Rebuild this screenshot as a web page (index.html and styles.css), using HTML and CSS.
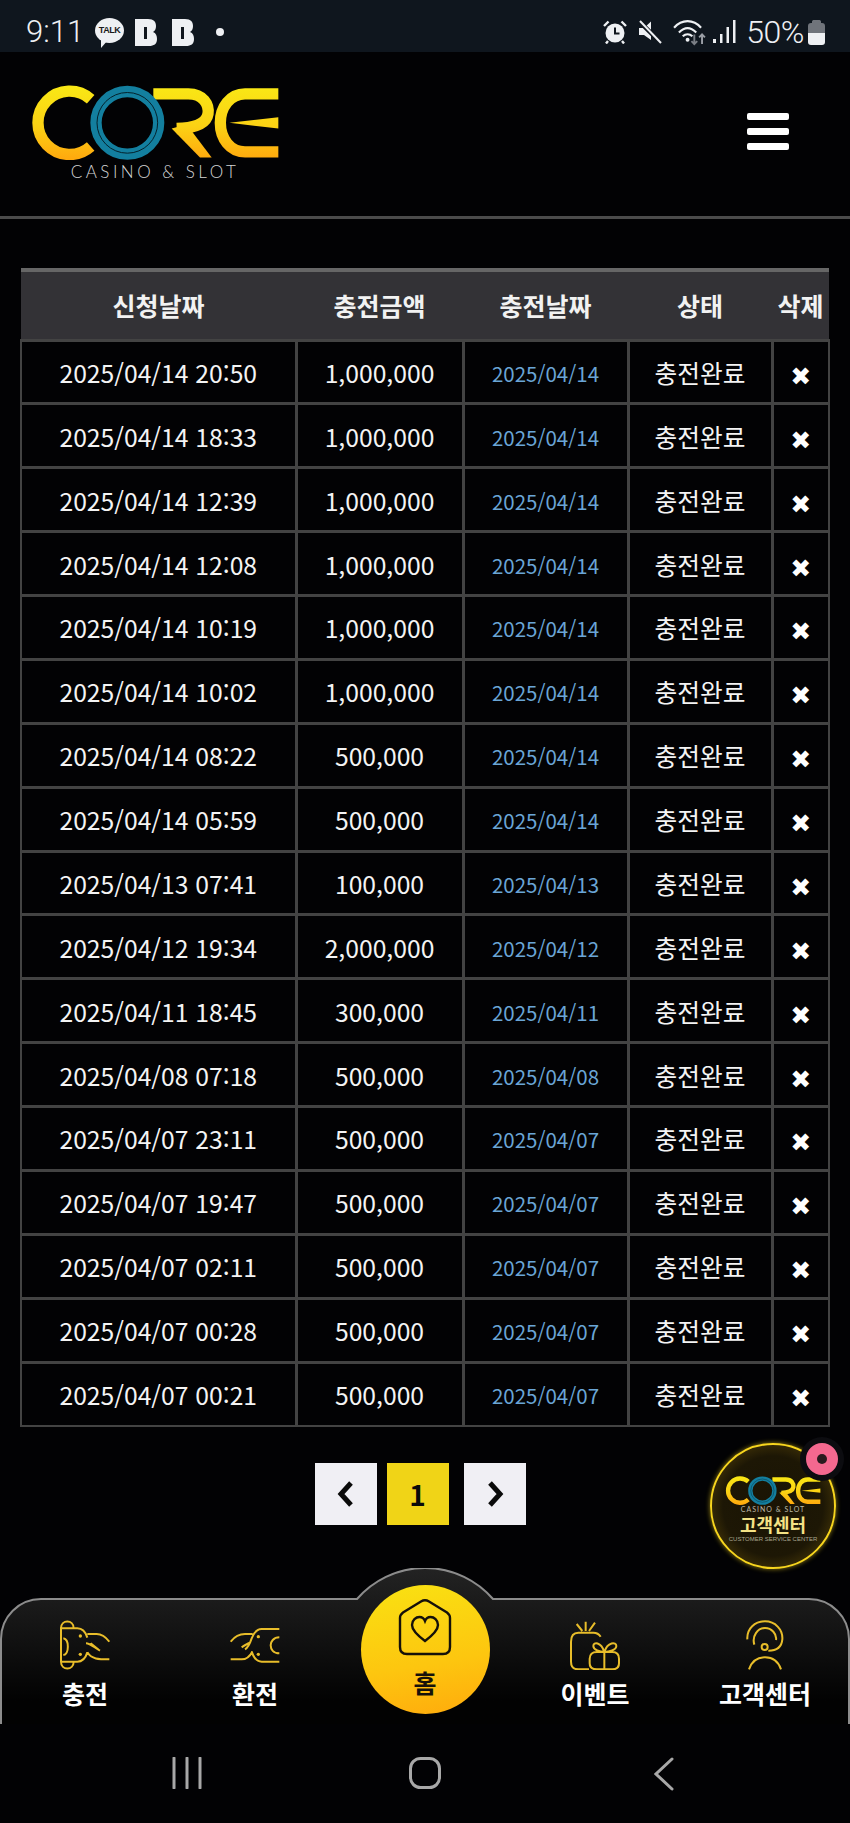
FILE: index.html
```html
<!DOCTYPE html>
<html lang="ko">
  <head>
    <meta charset="UTF-8" />
    <meta name="viewport" content="width=device-width, initial-scale=1.0" />
    <title>충전내역</title>
    <link rel="stylesheet" href="styles.css">
  </head>

  <body>
    <svg class="defs" width="0" height="0">
      <defs>
        <linearGradient id="gold" gradientUnits="userSpaceOnUse" x1="0" y1="260" x2="0" y2="475">
          <stop offset="0" stop-color="#f9e715" />
          <stop offset="0.55" stop-color="#fbd114" />
          <stop offset="1" stop-color="#ffa90e" />
        </linearGradient>
        <symbol id="core" viewBox="90 255 750 222">
          <path d="M272 296 A 95 95 0 1 0 272 438" fill="none" stroke="url(#gold)" stroke-width="34" />
          <path d="M460 280 H565 C610 280 628 312 624 340 C620 366 590 382 530 384" fill="none" stroke="url(#gold)" stroke-width="34" />
          <polygon points="515,384 560,372 635,471 600,471" fill="url(#gold)" />
          <path d="M835 280 H735 C690 280 661 320 661 367 C661 414 690 454 735 454 H835" fill="none" stroke="url(#gold)" stroke-width="34" />
          <polygon points="688,367 835,350 835,384" fill="url(#gold)" />
          <circle cx="382" cy="367" r="94" fill="none" stroke="#137f9f" stroke-width="34" />
          <circle cx="382" cy="367" r="91" fill="none" stroke="#04222c" stroke-width="3" />
        </symbol>
      </defs>
    </svg>

    <div class="statusbar">
      <div class="status_left">
        <span class="time">9:11</span>
        <span class="talk"><span>TALK</span></span>
        <svg class="blog" viewBox="0 0 22 29"><path d="M0 1 H13 C19 1 21 4 21 8 C21 11 20 13 18 14 C21 15 22 18 22 21 C22 26 19 28 14 28 H0 Z" fill="#eef0f3" /><rect x="9" y="9" width="3" height="12" fill="#10161e" /></svg>
        <svg class="blog" viewBox="0 0 22 29"><path d="M0 1 H13 C19 1 21 4 21 8 C21 11 20 13 18 14 C21 15 22 18 22 21 C22 26 19 28 14 28 H0 Z" fill="#eef0f3" /><rect x="9" y="9" width="3" height="12" fill="#10161e" /></svg>
        <span class="dot"></span>
      </div>
      <div class="status_right">
        <svg class="ic_alarm" viewBox="0 0 24 24">
          <circle cx="12" cy="13" r="9.5" fill="#eef0f3" />
          <path d="M12 7.5 V13.5 H16.5" fill="none" stroke="#10161e" stroke-width="2" />
          <path d="M1 6 L5.5 1.5 M23 6 L18.5 1.5 M5 21 L3 23.5 M19 21 L21 23.5" stroke="#eef0f3" stroke-width="2.4" />
        </svg>
        <svg class="ic_mute" viewBox="0 0 24 24">
          <path d="M1 8 H6 L13 1.5 V20 L6 15 H1 Z" fill="#eef0f3" />
          <path d="M1 1 L23 23" stroke="#10161e" stroke-width="4.5" />
          <path d="M2 1 L23 23" stroke="#eef0f3" stroke-width="2" />
        </svg>
        <svg class="ic_wifi" viewBox="0 0 34 28">
          <path d="M1 9 C9 0 21 0 29 9 M6 14 C12 8 18 8 24 14 M10 18 C13 15 17 15 20 18" fill="none" stroke="#eef0f3" stroke-width="2.2" />
          <circle cx="15" cy="21.5" r="2" fill="#eef0f3" />
          <path d="M22 16 V26 M19 23 L22 26 L25 23" fill="none" stroke="#7b7f86" stroke-width="2" />
          <path d="M30 26 V16 M27 19 L30 16 L33 19" fill="none" stroke="#9a9ea5" stroke-width="2" />
        </svg>
        <svg class="ic_signal" viewBox="0 0 23 24">
          <rect x="0" y="19" width="3" height="4" fill="#eef0f3" />
          <rect x="7" y="14" width="2.5" height="9" fill="#eef0f3" />
          <rect x="13.5" y="7" width="2.5" height="16" fill="#eef0f3" />
          <rect x="20" y="0" width="2.5" height="23" fill="#eef0f3" />
        </svg>
        <span class="percent">50%</span>
        <svg class="battery" viewBox="0 0 17 25">
          <path d="M4 3 V1.500 C4 0.500 5 0 6 0 H11 C12 0 13 0.500 13 1.500 V3 H14 C16 3 17 4 17 6 V14 H0 V6 C0 4 1 3 3 3 Z" fill="#70747b" />
          <path d="M0 13 H17 V22 C17 24 16 25 14 25 H3 C1 25 0 24 0 22 Z" fill="#eef0f3" />
        </svg>
      </div>
    </div>

    <header class="site_header">
      <a href="#" class="logo">
        <svg class="logo_mark"><use href="#core" /></svg>
        <span class="logo_sub">CASINO &amp; SLOT</span>
      </a>
      <button class="burger" aria-label="메뉴"><i></i><i></i><i></i></button>
    </header>

    <main>
      <table class="charge_list">
        <thead>
          <tr>
            <th class="c_req">신청날짜</th>
            <th class="c_amount">충전금액</th>
            <th class="c_date">충전날짜</th>
            <th class="c_state">상태</th>
            <th class="c_del">삭제</th>
          </tr>
        </thead>
        <tbody>
          <tr><td>2025/04/14 20:50</td><td>1,000,000</td><td class="blue">2025/04/14</td><td>충전완료</td><td class="del">✖</td></tr>
          <tr><td>2025/04/14 18:33</td><td>1,000,000</td><td class="blue">2025/04/14</td><td>충전완료</td><td class="del">✖</td></tr>
          <tr><td>2025/04/14 12:39</td><td>1,000,000</td><td class="blue">2025/04/14</td><td>충전완료</td><td class="del">✖</td></tr>
          <tr><td>2025/04/14 12:08</td><td>1,000,000</td><td class="blue">2025/04/14</td><td>충전완료</td><td class="del">✖</td></tr>
          <tr><td>2025/04/14 10:19</td><td>1,000,000</td><td class="blue">2025/04/14</td><td>충전완료</td><td class="del">✖</td></tr>
          <tr><td>2025/04/14 10:02</td><td>1,000,000</td><td class="blue">2025/04/14</td><td>충전완료</td><td class="del">✖</td></tr>
          <tr><td>2025/04/14 08:22</td><td>500,000</td><td class="blue">2025/04/14</td><td>충전완료</td><td class="del">✖</td></tr>
          <tr><td>2025/04/14 05:59</td><td>500,000</td><td class="blue">2025/04/14</td><td>충전완료</td><td class="del">✖</td></tr>
          <tr><td>2025/04/13 07:41</td><td>100,000</td><td class="blue">2025/04/13</td><td>충전완료</td><td class="del">✖</td></tr>
          <tr><td>2025/04/12 19:34</td><td>2,000,000</td><td class="blue">2025/04/12</td><td>충전완료</td><td class="del">✖</td></tr>
          <tr><td>2025/04/11 18:45</td><td>300,000</td><td class="blue">2025/04/11</td><td>충전완료</td><td class="del">✖</td></tr>
          <tr><td>2025/04/08 07:18</td><td>500,000</td><td class="blue">2025/04/08</td><td>충전완료</td><td class="del">✖</td></tr>
          <tr><td>2025/04/07 23:11</td><td>500,000</td><td class="blue">2025/04/07</td><td>충전완료</td><td class="del">✖</td></tr>
          <tr><td>2025/04/07 19:47</td><td>500,000</td><td class="blue">2025/04/07</td><td>충전완료</td><td class="del">✖</td></tr>
          <tr><td>2025/04/07 02:11</td><td>500,000</td><td class="blue">2025/04/07</td><td>충전완료</td><td class="del">✖</td></tr>
          <tr><td>2025/04/07 00:28</td><td>500,000</td><td class="blue">2025/04/07</td><td>충전완료</td><td class="del">✖</td></tr>
          <tr><td>2025/04/07 00:21</td><td>500,000</td><td class="blue">2025/04/07</td><td>충전완료</td><td class="del">✖</td></tr>
        </tbody>
      </table>

      <div class="pager">
        <a href="#" class="page_btn page_prev"><svg viewBox="0 0 20 28"><path d="M15 3 L5 14 L15 25" fill="none" stroke="#0a0a0a" stroke-width="5" /></svg></a>
        <a href="#" class="page_btn valgt">1</a>
        <a href="#" class="page_btn page_next"><svg viewBox="0 0 20 28"><path d="M5 3 L15 14 L5 25" fill="none" stroke="#0a0a0a" stroke-width="5" /></svg></a>
      </div>
    </main>

    <a href="#" class="cs_badge">
      <svg class="cs_logo"><use href="#core" /></svg>
      <span class="cs_sub">CASINO &amp; SLOT</span>
      <span class="cs_title">고객센터</span>
      <span class="cs_tiny">CUSTOMER SERVICE CENTER</span>
      <span class="cs_pin"></span>
    </a>

    <nav class="tabbar">
      <svg class="tabbar_bg" viewBox="0 0 850 156" preserveAspectRatio="none">
        <defs>
          <linearGradient id="barfill" x1="0" y1="0" x2="0" y2="1">
            <stop offset="0" stop-color="#232323" />
            <stop offset="0.85" stop-color="#020202" />
          </linearGradient>
        </defs>
        <path d="M1 156 V71 A40 40 0 0 1 41 31 H357 A90 90 0 0 1 493 31 H809 A40 40 0 0 1 849 71 V156" fill="url(#barfill)" stroke="#8c8c8c" stroke-width="2" />
      </svg>

      <a href="#" class="tab">
        <svg class="tab_icon" viewBox="180 180 150 150">
          <path d="M183 205 C183 178 221 178 221 205 H183 V305 C183 332 221 332 221 305 H183 M221 205 H232 C248 205 258 220 262 233 M221 305 H232 C248 305 258 290 262 277 M190 235 C208 238 208 282 190 285 M262 222 H290 C305 222 318 232 328 245 M258 250 C270 250 282 262 300 272 M262 277 C275 298 295 298 328 298 M272 250 L297 270" fill="none" stroke="#e8bd2a" stroke-width="6" />
          <circle cx="241" cy="228" r="5" fill="#e8bd2a" />
          <circle cx="241" cy="283" r="5" fill="#e8bd2a" />
        </svg>
        <span>충전</span>
      </a>
      <a href="#" class="tab">
        <svg class="tab_icon" viewBox="690 180 150 150">
          <path d="M838 207 H785 C770 207 760 222 755 235 C750 250 745 262 735 268 M838 305 H785 C770 305 760 290 755 275 M838 232 C820 232 812 245 812 256 C812 268 820 280 838 280 M692 245 C702 232 715 222 735 222 H758 M725 262 C735 255 742 250 750 248 M692 298 H725 C740 298 750 288 757 275" fill="none" stroke="#e8bd2a" stroke-width="6" />
          <circle cx="775" cy="230" r="5" fill="#e8bd2a" />
          <circle cx="775" cy="283" r="5" fill="#e8bd2a" />
        </svg>
        <span>환전</span>
      </a>
      <a href="#" class="tab tab_home">
        <span class="home_circle">
          <svg class="home_icon" viewBox="0 0 60 60">
            <path d="M5 19 C5 16 6 15 8 13.500 L26 2.500 C28.500 1 31.500 1 34 2.500 L52 13.500 C54 15 55 16 55 19 V48 C55 53 53 55 48 55 H12 C7 55 5 53 5 48 Z" fill="none" stroke="#15110a" stroke-width="2.400" />
            <path d="M30 42 C22 36 17 31 17 26 C17 21 21 18 24.500 18 C27 18 29 19.500 30 22 C31 19.500 33 18 35.500 18 C39 18 43 21 43 26 C43 31 38 36 30 42 Z" fill="none" stroke="#15110a" stroke-width="2.400" />
          </svg>
          <span>홈</span>
        </span>
      </a>
      <a href="#" class="tab">
        <svg class="tab_icon" viewBox="435 180 150 150">
          <path d="M492 328 H460 C445 328 438 320 438 305 V245 C438 228 445 218 460 218 H505 C515 218 522 222 527 230 M482 185 V213 M455 192 L472 213 M510 188 L492 213" fill="none" stroke="#e8bd2a" stroke-width="6" />
          <path d="M515 276 H562 C575 276 582 284 582 296 V310 C582 322 575 328 562 328 H515 C502 328 494 322 494 310 V296 C494 284 502 276 515 276 Z M538 276 V328 M538 276 C525 276 505 270 505 258 C505 245 528 245 538 276 C548 245 574 245 574 258 C574 270 552 276 538 276 Z" fill="none" stroke="#e8bd2a" stroke-width="6" />
        </svg>
        <span>이벤트</span>
      </a>
      <a href="#" class="tab">
        <svg class="tab_icon" viewBox="945 180 150 150">
          <path d="M967 238 C965 205 990 184 1020 184 C1050 184 1074 208 1072 238 C1070 262 1052 272 1030 272 M988 254 C980 228 998 204 1020 204 C1040 204 1056 222 1053 240 M972 328 C980 305 998 292 1020 292 C1042 292 1060 305 1068 328" fill="none" stroke="#e8bd2a" stroke-width="6" />
          <circle cx="1019" cy="261" r="9" fill="none" stroke="#e8bd2a" stroke-width="6" />
        </svg>
        <span>고객센터</span>
      </a>
    </nav>

    <div class="softkeys">
      <svg class="key_recent" viewBox="0 0 30 32"><path d="M2 1 V31 M15 1 V31 M28 1 V31" stroke="#a8a8a8" stroke-width="3" stroke-linecap="round" /></svg>
      <svg class="key_home" viewBox="0 0 32 32"><rect x="1.500" y="1.500" width="29" height="29" rx="10" fill="none" stroke="#a8a8a8" stroke-width="3" /></svg>
      <svg class="key_back" viewBox="0 0 20 34"><path d="M18 2 L2 17 L18 32" fill="none" stroke="#a8a8a8" stroke-width="3" stroke-linecap="round" /></svg>
    </div>
  </body>
</html>
```

FILE: styles.css
```css
* {
  box-sizing: border-box;
}

html,
body {
  margin: 0;
  padding: 0;
}

body {
  position: relative;
  width: 850px;
  height: 1823px;
  overflow: hidden;
  background-color: #020204;
  color: #f4f4f4;
  font-family: "Noto Sans CJK KR", "Noto Sans", sans-serif;
}

a {
  color: inherit;
  text-decoration: none;
}

.defs {
  display: block;
  height: 0;
}

/* status bar */
.statusbar {
  height: 52px;
  background-color: #0f161e;
  display: flex;
  justify-content: space-between;
  align-items: center;
  padding: 12px 25px 0 26px;
  color: #eef0f3;
}

.status_left,
.status_right {
  display: flex;
  align-items: center;
}

.time {
  font-family: Roboto, sans-serif;
  font-weight: 300;
  font-size: 31px;
  line-height: 32px;
  width: 69px;
}

.talk {
  width: 29px;
  height: 25px;
  background-color: #eef0f3;
  border-radius: 50%;
  display: flex;
  align-items: center;
  justify-content: center;
  position: relative;
  margin-right: 11px;
  margin-top: -4px;
}

.talk::after {
  content: "";
  position: absolute;
  left: 6px;
  bottom: -5px;
  border-top: 8px solid #eef0f3;
  border-right: 7px solid transparent;
}

.talk span {
  font-family: "Liberation Sans", sans-serif;
  font-size: 9px;
  font-weight: 700;
  letter-spacing: -0.5px;
  color: #1a1a1a;
}

.blog {
  width: 22px;
  height: 29px;
  margin-right: 15px;
}

.dot {
  width: 8px;
  height: 8px;
  border-radius: 50%;
  background-color: #eef0f3;
  margin-left: 7px;
}

.ic_alarm {
  width: 24px;
  height: 24px;
  margin-right: 11px;
}

.ic_mute {
  width: 24px;
  height: 24px;
  margin-right: 11px;
}

.ic_wifi {
  width: 33px;
  height: 27px;
  margin-right: 7px;
}

.ic_signal {
  width: 23px;
  height: 24px;
  margin-right: 10px;
}

.percent {
  font-family: Roboto, sans-serif;
  font-weight: 300;
  font-size: 32px;
  line-height: 32px;
  letter-spacing: -0.5px;
}

.battery {
  width: 17px;
  height: 25px;
  margin-left: 4px;
}

/* header */
.site_header {
  height: 167px;
  border-bottom: 3px solid #4b4b4b;
  display: flex;
  justify-content: space-between;
  padding: 33px 61px 0 30px;
}

.logo {
  display: flex;
  flex-direction: column;
  align-items: center;
  width: 250px;
}

.logo_mark {
  width: 250px;
  height: 75px;
  flex: none;
}

.logo_sub {
  font-family: Lato, "Liberation Sans", sans-serif;
  font-weight: 300;
  font-size: 17px;
  line-height: 16px;
  letter-spacing: 3.500px;
  color: #d4d4d4;
  margin-top: 4px;
}

.burger {
  width: 42px;
  height: 37px;
  margin-top: 28px;
  padding: 0;
  background: none;
  border: 0;
  display: flex;
  flex-direction: column;
  justify-content: space-between;
}

.burger i {
  display: block;
  height: 7px;
  background-color: #fff;
  border-radius: 2px;
}

/* table */
main {
  padding: 49px 21px 0 20px;
}

.charge_list {
  width: 808px;
  border-collapse: collapse;
  table-layout: fixed;
}

.charge_list th {
  height: 70px;
  background-color: #333236;
  border-top: 4px solid #666;
  font-size: 25px;
  font-weight: 700;
  padding: 0;
  color: #f2f2f2;
}

.c_req {
  width: 275px;
}

.c_amount {
  width: 167px;
}

.c_date {
  width: 165px;
}

.c_state {
  width: 144px;
}

.c_del {
  width: 57px;
}

.charge_list td {
  height: 63.880px;
  padding: 0;
  border: 3px solid #434343;
  background-color: #020204;
  text-align: center;
  font-size: 24.700px;
  font-weight: 400;
  font-feature-settings: "calt" 0;
  white-space: nowrap;
}

.charge_list td:first-child {
  border-left-width: 2px;
}

.charge_list td:last-child {
  border-right-width: 2px;
}

.charge_list tr:last-child td {
  border-bottom-width: 2px;
}

.charge_list .blue {
  font-size: 20.500px;
  color: #6aa5d6;
  padding-top: 2px;
}

.charge_list .del {
  font-family: "DejaVu Sans", sans-serif;
  font-size: 25px;
  color: #fff;
  padding-top: 9px;
}

/* pager */
.pager {
  display: flex;
  justify-content: center;
  gap: 10px;
  margin: 36px 0 43px;
  padding-right: 9px;
  height: 62px;
}

.page_btn {
  width: 62px;
  height: 62px;
  background-color: #f0eff4;
  display: flex;
  align-items: center;
  justify-content: center;
  color: #0a0a0a;
  font-size: 28px;
  font-weight: 700;
}

.page_btn svg {
  width: 20px;
  height: 28px;
}

.page_btn.valgt {
  background-color: #f0d417;
}

.page_next {
  margin-left: 5px;
}

/* floating badge */
.cs_badge {
  position: absolute;
  left: 710px;
  top: 1443px;
  width: 126px;
  height: 126px;
  border-radius: 50%;
  border: 2px solid #f7d51e;
  background: radial-gradient(circle, #1a1404 0%, #1d1705 58%, #4a3a08 84%, #b8960f 100%);
  box-shadow: 0 0 5px rgba(247, 213, 30, 0.6);
  display: flex;
  flex-direction: column;
  align-items: center;
  padding-top: 31px;
}

.cs_logo {
  width: 96px;
  height: 29px;
  flex: none;
}

.cs_sub {
  font-family: Lato, "Liberation Sans", sans-serif;
  font-size: 7px;
  line-height: 8px;
  letter-spacing: 1px;
  color: #bdb9a8;
}

.cs_title {
  font-size: 18px;
  line-height: 22px;
  font-weight: 700;
  color: #f4e285;
}

.cs_tiny {
  font-family: "Liberation Sans", sans-serif;
  font-size: 6px;
  line-height: 8px;
  color: #a9a590;
  white-space: nowrap;
}

.cs_pin {
  position: absolute;
  left: 94px;
  top: -2px;
  width: 32px;
  height: 32px;
  border-radius: 50%;
  background-color: #f4688f;
  border: 11px solid #f4688f;
  box-shadow: 0 0 0 6px #0c0c10;
}

.cs_pin::after {
  content: "";
  display: block;
  width: 10px;
  height: 10px;
  border-radius: 50%;
  background-color: #2a1a1e;
}

/* bottom tabs */
.tabbar {
  position: relative;
  height: 156px;
  display: grid;
  grid-template-columns: repeat(5, 170px);
}

.tabbar_bg {
  position: absolute;
  left: 0;
  top: 0;
  width: 850px;
  height: 156px;
}

.tab {
  position: relative;
  padding-top: 52px;
  display: flex;
  flex-direction: column;
  align-items: center;
  font-size: 25px;
  line-height: 36px;
  font-weight: 700;
  color: #fff;
}

.tab_icon {
  width: 50px;
  height: 50px;
  flex: none;
  margin-bottom: 5px;
}

.tab_home {
  padding-top: 17px;
}

.home_circle {
  width: 129px;
  height: 129px;
  border-radius: 50%;
  background: linear-gradient(170deg, #f9e212 0%, #fdc60f 60%, #ffaa0c 100%);
  color: #15110a;
  display: flex;
  flex-direction: column;
  align-items: center;
  padding-top: 14px;
}

.home_icon {
  width: 60px;
  height: 60px;
  flex: none;
  margin-bottom: 5px;
}

/* android keys */
.softkeys {
  height: 99px;
  background-color: #020204;
  position: relative;
  display: grid;
  grid-template-columns: 1fr 1fr 1fr;
  padding: 33px 176px 0 172px;
  align-items: start;
}

.key_recent {
  width: 30px;
  height: 32px;
}

.key_home {
  width: 32px;
  height: 32px;
  justify-self: center;
  margin-left: 4px;
}

.key_back {
  width: 20px;
  height: 34px;
  justify-self: end;
}
```
